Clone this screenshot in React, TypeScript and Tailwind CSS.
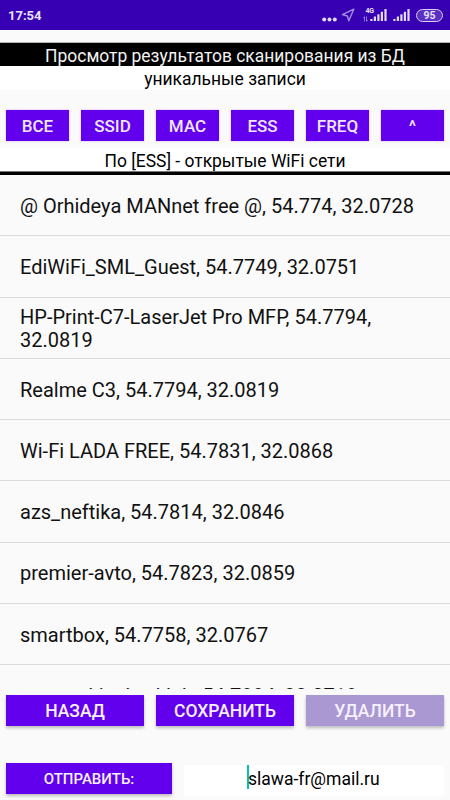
import React, { useState } from 'react';

const FILTERS = ['ВСЕ', 'SSID', 'MAC', 'ESS', 'FREQ', '^'];

const NETWORKS = [
  '@ Orhideya MANnet free @, 54.774, 32.0728',
  'EdiWiFi_SML_Guest, 54.7749, 32.0751',
  'HP-Print-C7-LaserJet Pro MFP, 54.7794, 32.0819',
  'Realme C3, 54.7794, 32.0819',
  'Wi-Fi LADA FREE, 54.7831, 32.0868',
  'azs_neftika, 54.7814, 32.0846',
  'premier-avto, 54.7823, 32.0859',
  'smartbox, 54.7758, 32.0767',
  'azs_ruskiosk_aklub, 54.7994, 32.0719',
];

function Signal() {
  return (
    <svg width="17" height="12" viewBox="0 0 17 12" fill="#e4daf8">
      <rect x="0.3" y="10" width="2.2" height="2" />
      <rect x="3.8" y="7.5" width="2.2" height="4.5" />
      <rect x="7.3" y="5.3" width="2.2" height="6.7" />
      <rect x="10.8" y="2.8" width="2.2" height="9.2" />
      <rect x="14.4" y="0" width="2.2" height="12" />
    </svg>
  );
}

function StatusBar() {
  return (
    <div className="flex h-[30px] shrink-0 items-center bg-[#3700b3] pl-2 pr-[7px] text-[#e9e2fa]">
      <span className="text-[13px] font-bold leading-none">17:54</span>
      <svg className="ml-auto mt-[8px]" width="15" height="5" viewBox="0 0 15 5" fill="#e4daf8">
        <circle cx="2.2" cy="2.5" r="2" />
        <circle cx="7.5" cy="2.5" r="2" />
        <circle cx="12.8" cy="2.5" r="2" />
      </svg>
      <svg className="ml-[4px]" width="14" height="14" viewBox="0 0 14 14" fill="none" stroke="#a58be0" strokeWidth="1.4" strokeLinejoin="round">
        <path d="M12.8 1.2 1.4 6.6l4.9 1.4 1.5 4.8z" />
      </svg>
      {/* Network type with data arrows */}
      <div className="ml-[8px] flex h-[14px] w-[7px] flex-col justify-between">
        <span className="ml-[2.5px] text-[7px] font-bold leading-[7px] tracking-tight">4G</span>
        <svg width="5" height="6" viewBox="0 0 5 6" fill="none" stroke="#9a7fdc" strokeWidth="0.9">
          <path d="M1.5 5.5V0.7L0 2.2M3.5 0.5v4.8L5 3.8" />
        </svg>
      </div>
      <Signal />
      <div className="w-[6px]" />
      <Signal />
      <div className="ml-[6px] flex h-[13px] w-[27px] items-center justify-center rounded-full border-[1.5px] border-[#d9ccf5] bg-[#5c30c4] pt-[2px] text-[10.5px] font-bold leading-none">
        95
      </div>
    </div>
  );
}

interface ActionButtonProps {
  label: string;
  className: string;
  disabled?: boolean;
}

function ActionButton({ label, className, disabled }: ActionButtonProps) {
  return (
    <button
      type="button"
      disabled={disabled}
      className={`flex h-[31px] items-center justify-center pt-[2px] font-medium text-[#f6f0ff] shadow-[0_2px_3px_rgba(0,0,0,0.25)] ${
        disabled ? 'bg-[#a998d2]' : 'bg-[#6200ee]'
      } ${className}`}
    >
      {label}
    </button>
  );
}

export default function App() {
  const [email, setEmail] = useState('slawa-fr@mail.ru');

  return (
    <div className="flex h-[800px] w-[450px] flex-col overflow-hidden bg-[#fafafa] font-['Roboto',sans-serif] text-black">
      <StatusBar />

      {/* Title */}
      <div className="mt-3 h-[24px] shrink-0 border-t border-[#b5b5b5] bg-black text-center text-[17.45px] leading-[26px] text-[#f2f2f2]">
        Просмотр результатов сканирования из БД
      </div>
      <div className="h-[24px] shrink-0 bg-white text-center text-[17.45px] leading-[27px]">уникальные записи</div>

      {/* Filters */}
      <div className="mt-5 grid shrink-0 grid-cols-6 gap-3 px-1.5">
        {FILTERS.map((label) => (
          <button
            key={label}
            type="button"
            className="h-[31px] bg-[#6200ee] pt-px text-[17px] font-medium leading-[31px] text-[#f0e6ff] shadow-[0_0_2px_rgba(98,0,238,0.3)]"
          >
            {label}
          </button>
        ))}
      </div>
      <div className="mt-[7px] h-[23px] shrink-0 bg-white text-center text-[17.45px] leading-[26px]">
        По [ESS] - открытые WiFi сети
      </div>
      <div className="h-1 shrink-0 border-t border-[#777] bg-black" />

      {/* Networks */}
      <div className="h-[514px] shrink-0 overflow-hidden">
        {NETWORKS.map((network) => (
          <div
            key={network}
            className="flex h-[61.25px] items-center border-b border-[#dadada] px-5 pt-[3px] text-[20px] leading-[23.5px] text-[#111] last:tracking-[0.05px]"
          >
            {network}
          </div>
        ))}
      </div>

      <div className="mt-[6px] flex shrink-0 gap-3 px-1.5 text-[17.5px]">
        <ActionButton label="НАЗАД" className="flex-1" />
        <ActionButton label="СОХРАНИТЬ" className="flex-1" />
        <ActionButton label="УДАЛИТЬ" className="flex-1" disabled />
      </div>

      <div className="mt-[36.5px] flex shrink-0 gap-3 px-1.5 text-[15px]">
        <ActionButton label="ОТПРАВИТЬ:" className="w-[166px]" />
        <div className="mt-[2px] flex h-[31px] flex-1 items-center bg-white pl-[63px]">
          <div className="mt-[-7px] h-6 w-[2px] shrink-0 bg-[#03c4b3]" />
          <input
            value={email}
            onChange={(e) => setEmail(e.target.value)}
            className="ml-[-1px] mt-[-2px] w-[150px] text-[17.5px] outline-none"
          />
        </div>
      </div>
    </div>
  );
}
